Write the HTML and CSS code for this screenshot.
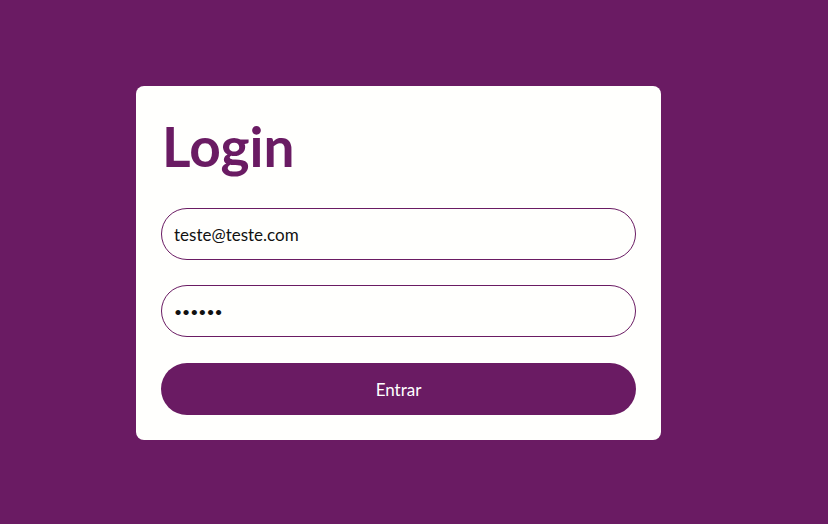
FILE: index.html
```html
<!DOCTYPE html>
<html lang="pt">
<head>
<meta charset="utf-8">
<title>Login</title>
<link rel="stylesheet" href="styles.css">
</head>
<body>
<main class="page">
  <form class="card">
    <h1 class="title">Login</h1>
    <input class="field" type="email" value="teste@teste.com">
    <input class="field field-pass" type="password" value="123456">
    <button class="btn" type="button">Entrar</button>
  </form>
</main>
</body>
</html>
```
FILE: styles.css
```css
* { box-sizing: border-box; }
html, body { margin: 0; height: 100%; }
body {
  background: #6a1b63;
  font-family: Lato, "Noto Sans", sans-serif;
}
.page {
  height: 524px;
  display: flex;
  align-items: flex-start;
  padding: 86px 0 0 136px;
}
.card {
  width: 525px;
  background: #fffffd;
  border-radius: 8px;
  padding: 23px 25px 25px 25px;
  display: flex;
  flex-direction: column;
  gap: 25px;
}
.title {
  margin: 0 0 0 1px;
  font-size: 55px;
  line-height: 74px;
  font-weight: 700;
  color: #6a1b63;
}
.field {
  height: 52px;
  width: 475px;
  border: 1px solid #6a1b63;
  border-radius: 26px;
  padding: 0 12px;
  font-family: inherit;
  font-size: 17px;
  color: #111;
  background: #fffffd;
  outline: none;
}
.field-pass { font-size: 14px; }
.btn {
  height: 52px;
  width: 475px;
  margin-top: 1px;
  border: none;
  border-radius: 26px;
  background: #6a1b63;
  color: #fff;
  font-family: inherit;
  font-size: 17px;
  cursor: pointer;
}
```
